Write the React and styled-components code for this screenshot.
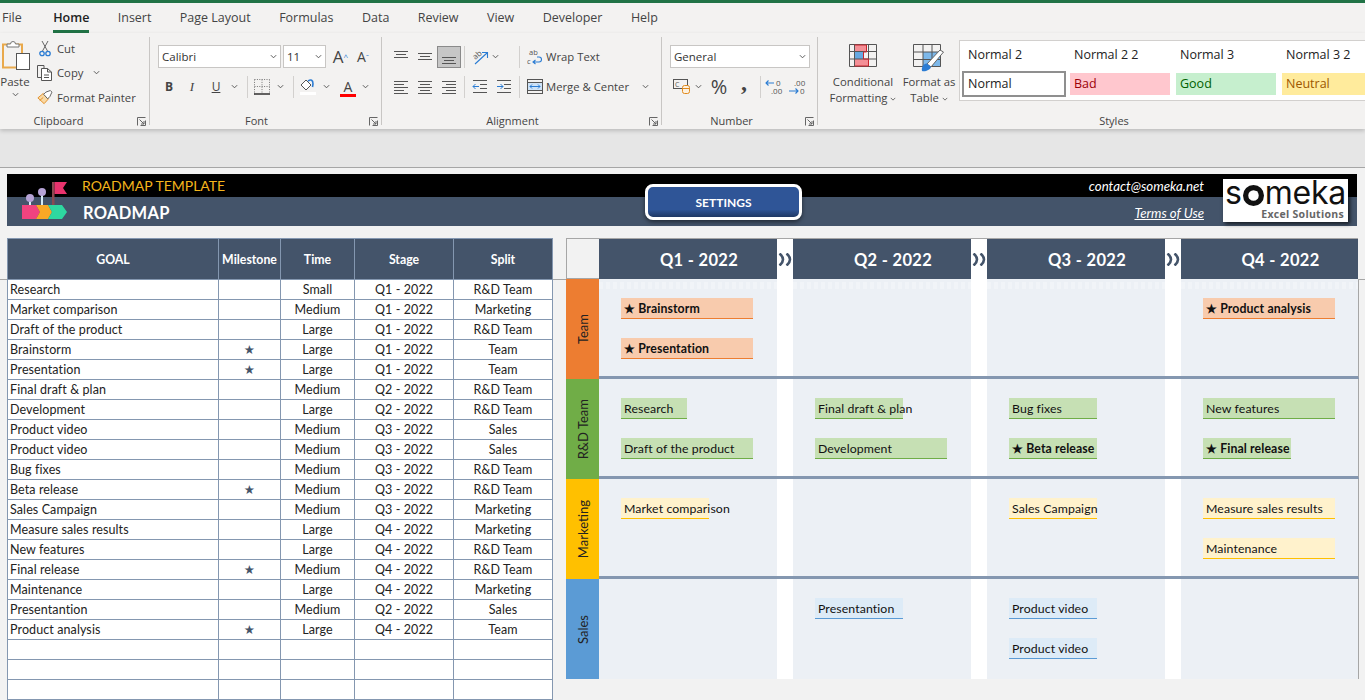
import React from 'react';
import styled, { createGlobalStyle } from 'styled-components';

const Global = createGlobalStyle`
  html, body { margin: 0; padding: 0; background: #f2f2f2; }
  * { box-sizing: border-box; }
`;

const Page = styled.div`
  position: relative; width: 1365px; height: 700px; overflow: hidden;
  background: #f2f2f2; font-family: "Lato", "Liberation Sans", sans-serif;
`;
const GreenBar = styled.div`height: 3px; background: #217346;`;
const TabBar = styled.nav`
  height: 30px; background: #f3f2f1; display: flex; padding-left: 2px; gap: 28.4px;
  font: 12.5px "Open Sans", "Noto Sans", sans-serif; color: #444;
`;
const Tab = styled.div`
  height: 100%; line-height: 30px; position: relative;
  font-weight: ${p => (p.$active ? 600 : 400)}; color: ${p => (p.$active ? '#222' : '#444')};
  border-bottom: 3px solid ${p => (p.$active ? '#217346' : 'transparent')};
  margin-left: ${p => (p.$active ? 3 : 0)}px;
`;
const Ribbon = styled.section`
  height: 96px; background: #f3f2f1; display: flex; padding: 4px 0;
  box-shadow: 0 2px 4px rgba(0,0,0,.18); position: relative; z-index: 1;
  font: 11.3px "Open Sans", "Noto Sans", sans-serif; color: #444;
`;
const Group = styled.div`
  width: ${p => p.$w}px; flex: none; display: flex; flex-direction: column; position: relative;
  border-right: ${p => (p.$last ? 'none' : '1px solid #c8c6c4')};
`;
const GroupBody = styled.div`
  height: 76px; flex: none; padding: ${p => p.$pt ?? 8}px 0 0 ${p => p.$pl ?? 0}px;
  display: ${p => (p.$row ? 'flex' : 'block')};
`;
const GroupLabel = styled.div`
  height: 16px; flex: none; line-height: 16px; text-align: center; font-size: 11px; color: #444;
  padding-right: ${p => p.$pr || 0}px;
`;
const StylesLabel = styled(GroupLabel)`margin-top: 12px; width: 310px;`;
const Launcher = styled.svg`position: absolute; right: 3px; bottom: -1px; width: 9px; height: 9px;`;
const Row = styled.div`
  display: flex; align-items: center; height: ${p => p.$h || 23}px; margin-top: ${p => p.$mt || 0}px;
`;
const Slot = styled.div`
  width: ${p => p.$w}px; height: 22px; flex: none; margin-left: ${p => p.$ml || 0}px;
  display: flex; align-items: center; justify-content: ${p => (p.$start ? 'flex-start' : 'center')}; position: relative;
  white-space: nowrap;
  ${p => p.$on && 'background:#c6c6c6; border:1px solid #8a8a8a;'}
`;
const Sep = styled.div`width: 1px; height: 22px; background: #d2d0ce; flex: none; margin-left: ${p => p.$ml || 0}px;`;
const Field = styled.div`
  width: ${p => p.$w}px; height: 23px; flex: none; background: #fff; border: 1px solid #c8c6c4;
  margin-left: ${p => p.$ml || 0}px; display: flex; align-items: center; justify-content: space-between;
  padding: 0 3px 0 3px; font-size: 11.5px; color: #333;
`;
const Glyph = styled.span`
  font: ${p => p.$weight || 400} ${p => p.$size || 13}px/1 ${p => p.$serif ? '"Liberation Serif", serif' : '"Open Sans", sans-serif'};
  font-style: ${p => (p.$italic ? 'italic' : 'normal')};
  text-decoration: ${p => (p.$under ? 'underline' : 'none')};
  color: ${p => p.$color || '#444'};
  margin-top: ${p => p.$mt || 0}px;
`;
const ColorBar = styled.span`
  position: absolute; left: 50%; bottom: 1px; width: 16px; height: 3px; margin-left: -8px; background: ${p => p.$c};
`;
const ClipLayout = styled.div`display: flex; height: 100%;`;
const PasteCol = styled.div`
  width: 36px; flex: none; display: flex; flex-direction: column; align-items: center; color: #444;
  margin-top: -3px; padding-right: 6px;
`;
const PasteText = styled.span`margin-top: 4px; font-size: 11.5px; line-height: 16px;`;
const PasteChev = styled.span`margin-top: 1px; display: flex;`;
const ClipList = styled.div`display: flex; flex-direction: column; margin-top: -7px;`;
const ClipItem = styled.div`
  display: flex; align-items: center; height: 24.5px; gap: 4px; margin-left: 1px; white-space: nowrap;
`;
const ItemIcon = styled.span`width: 16px; height: 16px; flex: none; display: flex; align-items: center; justify-content: center;`;
const BigBtn = styled.div`
  width: ${p => p.$w}px; flex: none; display: flex; flex-direction: column; align-items: center;
  line-height: 16px; text-align: center; white-space: nowrap;
`;
const BigIcon = styled.div`height: 34px; padding-top: 4px; display: flex; align-items: flex-start;`;
const Gallery = styled.div`
  flex: none; margin-top: 3px; height: 61px; width: 406px; overflow: hidden; background: #fff; border: 1px solid #d2d0ce; border-right: none;
  display: grid; grid-template-columns: repeat(4, 100px); grid-template-rows: 29px 27px; column-gap: 6px; padding-left: 4px;
  font-size: 12.5px; color: #222;
`;
const StyleName = styled.div`padding-left: 4px; line-height: 28px; white-space: nowrap;`;
const Swatch = styled.div`
  height: 22px; margin-top: 3px; line-height: 22px; padding-left: 4px; background: ${p => p.$bg}; color: ${p => p.$fg};
  ${p => p.$sel && 'outline: 2px solid #8f8f8f;'}
`;
const GrayBand = styled.div`height: 39px; background: #e6e6e6; border-bottom: 1px solid #a6a6a6;`;

const Banner = styled.header`position: relative; margin: 6px 8px 0 7px; height: 52px;`;
const BlackStrip = styled.div`
  height: 23px; background: #000; display: flex; align-items: center; justify-content: space-between;
  padding: 0 153px 0 75px;
`;
const NavyStrip = styled.div`
  height: 29px; background: #44546a; display: flex; align-items: center; justify-content: space-between;
  padding: 2px 153px 0 76px;
`;
const Template = styled.span`color: #f4b51c; font-size: 14px;`;
const SheetTitle = styled.span`color: #fff; font-size: 16.5px; font-weight: 700; letter-spacing: .3px;`;
const Contact = styled.span`color: #fff; font-size: 13.3px; font-style: italic;`;
const Terms = styled.span`color: #fff; font-size: 13.2px; font-style: italic; text-decoration: underline;`;
const LogoMark = styled.svg`position: absolute; left: 14px; top: 7px; width: 48px; height: 40px;`;
const SettingsBtn = styled.div`
  position: absolute; left: 638px; top: 10px; width: 157px; height: 36px; border: 3px solid #fff; border-radius: 8px;
  background: linear-gradient(#2f5597 0, #2f5597 75%, #1f3864 100%); color: #fff; font-weight: 700; font-size: 12px;
  display: flex; align-items: center; justify-content: center; box-shadow: 0 2px 4px rgba(0,0,0,.5);
`;
const SomekaCard = styled.div`
  position: absolute; left: 1216px; top: 5px; width: 125px; height: 43px; background: #fff;
  box-shadow: 2px 2px 4px rgba(0,0,0,.7); display: flex; flex-direction: column; align-items: center;
`;
const SomekaWord = styled.div`
  font: 400 32px/28px "Inter", "Open Sans", sans-serif; color: #111; display: flex; align-items: center; letter-spacing: -.2px; height: 28px;
`;
const SomekaO = styled.svg`width: 21px; height: 21px; margin: 4px 1px 0;`;
const SomekaSub = styled.div`
  font: 700 10.5px/12px "Open Sans", sans-serif; color: #666; align-self: flex-end; margin: 1px 4px 0 0; letter-spacing: .3px;
`;

const Sheet = styled.main`display: flex; gap: 13px; padding: 12px 0 0 7px; align-items: flex-start;`;
const FreezeLine = styled.div`position: absolute; left: 0; right: 0; top: 279px; height: 1px; background: #a6a6a6;`;
const Table = styled.table`
  position: relative; z-index: 1;
  width: 545px; flex: none; border-collapse: collapse; table-layout: fixed; font-size: 12.5px; color: #222; background: #fff;
`;
const Th = styled.th`
  height: 41px; padding: 0; background: #44546a; color: #fff; font-size: 12.3px; font-weight: 700;
  border: 1px solid #8497b0; width: ${p => p.$w}px;
`;
const Td = styled.td`
  height: 20px; padding: 0 0 0 ${p => (p.$left ? 2 : 0)}px; border: 1px solid #8497b0; line-height: 18px;
  text-align: ${p => (p.$left ? 'left' : 'center')}; white-space: nowrap; letter-spacing: .1px;
  color: ${p => (p.$star ? '#44546a' : '#222')}; font-family: ${p => (p.$star ? '"DejaVu Sans", sans-serif' : 'inherit')};
`;
const Gantt = styled.section`width: 792px; flex: none; position: relative; z-index: 1;`;
const GanttHead = styled.div`display: grid; grid-template-columns: 33px 178px 16px 178px 16px 178px 16px 177px; height: 41px;`;
const Corner = styled.div`border: 1px solid #a6a6a6; border-right: none; background: #f2f2f2;`;
const Quarter = styled.div`
  background: #44546a; color: #fff; font-size: 16.5px; font-weight: 700; display: flex; align-items: center; justify-content: center;
  border-top: 1px solid #a6a6a6; letter-spacing: .3px; padding: 2px 0 0 22px;
`;
const Arrows = styled.div`
  background: #fff; border-top: 1px solid #a6a6a6; display: flex; align-items: center; justify-content: center;
`;
const Band = styled.div`display: flex; height: 100px;`;
const BandLabel = styled.div`
  width: 33px; flex: none; background: ${p => p.$c}; color: #222; display: flex; align-items: center; justify-content: center;
  font-size: 13px;
`;
const Vertical = styled.span`writing-mode: vertical-rl; transform: rotate(180deg); white-space: nowrap;`;
const Track = styled.div`
  flex: 1; display: grid; grid-template-columns: 178px 16px 178px 16px 178px 16px 177px; background: #fff;
  border-bottom: ${p => (p.$last ? 'none' : '3px solid #8497b0')}; border-right: 1px solid #a6a6a6;
`;
const Cell = styled.div`
  background-color: #ecf0f5; padding: 19px 0 0 22px; display: flex; flex-direction: column; gap: 19px; align-items: flex-start;
  ${p => p.$faint && `
    background-image: repeating-linear-gradient(90deg, rgba(255,255,255,.28) 0 4px, transparent 4px 7px);
    background-size: 100% 7px; background-position: 0 3px; background-repeat: no-repeat;
  `}
`;
const GapCol = styled.div``;
const Bar = styled.div`
  width: ${p => p.$w}px; height: 21px; line-height: 22px; padding-left: 3px; white-space: nowrap;
  background: ${p => p.$bg}; border-bottom: 1px solid ${p => p.$line}; color: #111; font-size: 12.3px;
  font-weight: ${p => (p.$bold ? 700 : 400)}; letter-spacing: .1px;
`;

const Chev = ({ c = '#555', s = 7 }) => (
  <svg width={s} height={s} viewBox="0 0 8 8"><path d="M1 2.5 L4 5.5 L7 2.5" fill="none" stroke={c} strokeWidth="1.1" /></svg>
);
const Corn = () => (
  <Launcher viewBox="0 0 9 9"><path d="M.5 8.5V.5H8.5M8.5 3.5V8.5H3.5M2.5 2.5L7 7M7 4V7H4" fill="none" stroke="#666" strokeWidth="1" /></Launcher>
);
const Lines = ({ rows, w = 16, h = 14 }) => (
  <svg width={w} height={h} viewBox={`0 0 ${w} ${h}`}>
    {rows.map(([a, b, y], i) => <line key={i} x1={a} x2={b} y1={y + .5} y2={y + .5} stroke="#555" strokeWidth="1" />)}
  </svg>
);
const A_TOP = [[1, 15, 1], [3, 13, 4], [1, 15, 7]];
const A_MID = [[1, 15, 3], [3, 13, 6], [1, 15, 9]];
const A_BOT = [[1, 15, 7], [3, 13, 10], [1, 15, 13]];
const A_LEFT = [[1, 15, 1], [1, 11, 4], [1, 15, 7], [1, 11, 10], [1, 15, 13]];
const A_CENT = [[1, 15, 1], [3, 13, 4], [1, 15, 7], [3, 13, 10], [1, 15, 13]];
const A_RIGHT = [[1, 15, 1], [5, 15, 4], [1, 15, 7], [5, 15, 10], [1, 15, 13]];

const PasteIcon = () => (
  <svg width="30" height="30" viewBox="0 0 30 30">
    <rect x="3" y="4.5" width="19" height="23" fill="#f3f2f1" stroke="#e9a94b" strokeWidth="2" />
    <path d="M7 7V4H10.5A2.5 2.5 0 0 1 15.5 4H19V7Z" fill="#fff" stroke="#777" />
    <rect x="16.5" y="13.5" width="13" height="16" fill="#fff" stroke="#555" />
  </svg>
);
const CutIcon = () => (
  <svg width="12" height="17" viewBox="0 0 12 17">
    <path d="M3 1L8.5 11M9 1L3.5 11" stroke="#666" fill="none" />
    <circle cx="3" cy="13.5" r="2.2" fill="none" stroke="#2b7cd3" strokeWidth="1.3" />
    <circle cx="9" cy="13.5" r="2.2" fill="none" stroke="#2b7cd3" strokeWidth="1.3" />
  </svg>
);
const CopyIcon = () => (
  <svg width="16" height="16" viewBox="0 0 16 16">
    <path d="M4.5 12.5H.5V.5H7V3" fill="none" stroke="#555" />
    <path d="M4.5 3.5H10.5L14.5 7V15.5H4.5Z M10.5 3.5V7H14.5" fill="#fff" stroke="#555" />
    <path d="M7 10H12M7 12.5H12" stroke="#555" />
  </svg>
);
const PainterIcon = () => (
  <svg width="18" height="16" viewBox="0 0 18 16">
    <path d="M1 9L7 4L13 10L8 15.5Z" fill="#f9d9a4" stroke="#e08a1e" />
    <path d="M7.5 5L10 2.5L15 0.7L16.8 2.5L14.5 7.5L12 10Z" fill="#fff" stroke="#555" />
    <path d="M3 12L7 8.5" stroke="#e08a1e" />
  </svg>
);
const BorderIcon = () => (
  <svg width="16" height="16" viewBox="0 0 16 16">
    <path d="M.5 .5H15.5M.5 .5V14M15.5 .5V14M8 .5V14M.5 7.5H15.5" stroke="#777" strokeDasharray="1 1.4" fill="none" />
    <path d="M0 15H16" stroke="#222" strokeWidth="1.4" />
  </svg>
);
const FillIcon = () => (
  <svg width="18" height="17" viewBox="0 0 18 17">
    <path d="M2 7L7 2L12 7L7 12Z" fill="#fff" stroke="#555" />
    <path d="M9 3C12 1 14 2 14 6L13.5 9" fill="none" stroke="#2b7cd3" strokeWidth="1.6" />
    <rect x="1" y="14" width="16" height="3" fill="#fff" />
  </svg>
);
const OrientIcon = () => (
  <svg width="17" height="16" viewBox="0 0 17 16" overflow="visible">
    <text x="1" y="9" fontSize="8" fontFamily="Open Sans" fill="#555" transform="rotate(-40 5 7)">ab</text>
    <path d="M3 15L15 4M10 3.5H15.5V9" fill="none" stroke="#2b7cd3" strokeWidth="1.1" />
  </svg>
);
const WrapIcon = () => (
  <svg width="16" height="17" viewBox="0 0 16 17">
    <text x="2" y="6.5" fontSize="7.5" fontFamily="Open Sans" fill="#555">ab</text>
    <text x="0" y="15.5" fontSize="7.5" fontFamily="Open Sans" fill="#555">c</text>
    <path d="M6 14H12A2.5 2.5 0 0 0 12 9H10M8.5 12L6 14L8.5 16" fill="none" stroke="#2b7cd3" strokeWidth="1.1" />
  </svg>
);
const MergeIcon = () => (
  <svg width="16" height="15" viewBox="0 0 16 15">
    <rect x=".5" y=".5" width="15" height="14" fill="none" stroke="#555" />
    <path d="M.5 3.5H15.5M.5 11.5H15.5" stroke="#555" />
    <rect x="1" y="4" width="14" height="7" fill="#cfe3f7" />
    <path d="M3 7.5H13M5 5.5L3 7.5L5 9.5M11 5.5L13 7.5L11 9.5" fill="none" stroke="#2b7cd3" />
  </svg>
);
const IndentIcon = ({ rev }) => (
  <svg width="16" height="14" viewBox="0 0 16 14">
    <path d="M1 .5H15M8 4.5H15M8 8.5H15M1 12.5H15" stroke="#555" />
    <path d={rev ? 'M7 6.5H1M3.5 4L1 6.5L3.5 9' : 'M1 6.5H7M4.5 4L7 6.5L4.5 9'} fill="none" stroke="#2b7cd3" />
  </svg>
);
const AccountIcon = () => (
  <svg width="18" height="15" viewBox="0 0 18 15">
    <rect x=".5" y=".5" width="14" height="9" fill="none" stroke="#555" />
    <text x="2" y="7.5" fontSize="7" fontFamily="Open Sans" fill="#555">C</text>
    <rect x="9.5" y="6.5" width="7" height="8" rx="2" fill="#fdf1df" stroke="#e08a1e" />
    <path d="M9.5 9.5H16.5" stroke="#e08a1e" />
  </svg>
);
const DecIcon = ({ more }) => (
  <svg width="22" height="20" viewBox="0 0 22 20" fontFamily="Open Sans" fontSize="8" fill="#555">
    <text x={more ? 6 : 11} y="9">{more ? '.00' : '0'}</text>
    <text x={more ? 12 : 6} y="17">{more ? '0' : '.00'}</text>
    <path d={more ? 'M1 14H10M7.5 11.5L10 14L7.5 16.5' : 'M9 6H1M3.5 3.5L1 6L3.5 8.5'} fill="none" stroke="#2b7cd3" strokeWidth="1.1" />
  </svg>
);
const CondIcon = () => (
  <svg width="28" height="23" viewBox="0 0 28 23">
    <rect x="5.5" y="1" width="12" height="7" fill="#f48f96" />
    <rect x="5.5" y="8" width="9" height="7" fill="#66a8e0" />
    <rect x="5.5" y="15" width="14" height="7" fill="#f48f96" />
    <path d="M.5 .5H27.5V22.5H.5ZM.5 7.5H27.5M.5 15H27.5M5.5 .5V22.5M19.5 .5V22.5" fill="none" stroke="#555" />
    <path d="M5.5 1H17.5V8H14.5V15H19.5V22H5.5" fill="none" stroke="#c8242c" />
  </svg>
);
const TableIcon = () => (
  <svg width="32" height="28" viewBox="0 0 32 28">
    <rect x="10" y="8" width="18" height="15" fill="#7db8ea" />
    <path d="M.5 .5H27.5V22.5H.5ZM.5 8H27.5M.5 15.5H27.5M10 .5V22.5M19 .5V22.5" fill="none" stroke="#555" />
    <path d="M14 20L27 6L30.5 8L18 23Z" fill="#fff" stroke="#666" />
    <path d="M9 27C8 23 11 19 14 19.5L18 23C17 26 12 28 9 27Z" fill="#2b7cd3" />
  </svg>
);
const DoubleChevron = () => (
  <svg width="15" height="13" viewBox="0 0 15 13">
    <path d="M1.5 .5C4.5 3 5 4.5 5 6.5C5 8.5 4.5 10 1.5 12.5M8.5 .5C11.5 3 12 4.5 12 6.5C12 8.5 11.5 10 8.5 12.5" fill="none" stroke="#44546a" strokeWidth="2.6" />
  </svg>
);

const DATA = [
  ['Research', '', 'Small', 'Q1 - 2022', 'R&D Team'],
  ['Market comparison', '', 'Medium', 'Q1 - 2022', 'Marketing'],
  ['Draft of the product', '', 'Large', 'Q1 - 2022', 'R&D Team'],
  ['Brainstorm', '★', 'Large', 'Q1 - 2022', 'Team'],
  ['Presentation', '★', 'Large', 'Q1 - 2022', 'Team'],
  ['Final draft & plan', '', 'Medium', 'Q2 - 2022', 'R&D Team'],
  ['Development', '', 'Large', 'Q2 - 2022', 'R&D Team'],
  ['Product video', '', 'Medium', 'Q3 - 2022', 'Sales'],
  ['Product video', '', 'Medium', 'Q3 - 2022', 'Sales'],
  ['Bug fixes', '', 'Medium', 'Q3 - 2022', 'R&D Team'],
  ['Beta release', '★', 'Medium', 'Q3 - 2022', 'R&D Team'],
  ['Sales Campaign', '', 'Medium', 'Q3 - 2022', 'Marketing'],
  ['Measure sales results', '', 'Large', 'Q4 - 2022', 'Marketing'],
  ['New features', '', 'Large', 'Q4 - 2022', 'R&D Team'],
  ['Final release', '★', 'Medium', 'Q4 - 2022', 'R&D Team'],
  ['Maintenance', '', 'Large', 'Q4 - 2022', 'Marketing'],
  ['Presentantion', '', 'Medium', 'Q2 - 2022', 'Sales'],
  ['Product analysis', '★', 'Large', 'Q4 - 2022', 'Team'],
  ['', '', '', '', ''], ['', '', '', '', ''], ['', '', '', '', ''],
];

const BANDS = [
  { name: 'Team', c: '#ed7d31', bg: '#f8cbad', line: '#ed7d31', faint: true, q: [
    [['★ Brainstorm', 132, 1], ['★ Presentation', 132, 1]], [], [], [['★ Product analysis', 132, 1]] ] },
  { name: 'R&D Team', c: '#70ad47', bg: '#c6e0b4', line: '#70ad47', q: [
    [['Research', 66], ['Draft of the product', 132]], [['Final draft & plan', 88], ['Development', 132]],
    [['Bug fixes', 88], ['★ Beta release', 88, 1]], [['New features', 132], ['★ Final release', 88, 1]] ] },
  { name: 'Marketing', c: '#ffc000', bg: '#fff2cc', line: '#ffc000', q: [
    [['Market comparison', 88]], [], [['Sales Campaign', 88]], [['Measure sales results', 132], ['Maintenance', 132]] ] },
  { name: 'Sales', c: '#5b9bd5', bg: '#ddebf7', line: '#5b9bd5', last: true, q: [
    [], [['Presentantion', 88]], [['Product video', 88], ['Product video', 88]], [] ] },
];

const TABS = [['File'], ['Home', true], ['Insert'], ['Page Layout'], ['Formulas'], ['Data'], ['Review'], ['View'], ['Developer'], ['Help']];

export default function App() {
  return (
    <Page>
      <Global />
      <GreenBar />
      <TabBar>
        {TABS.map(([t, a]) => <Tab key={t} $active={a}>{t}</Tab>)}
      </TabBar>
      <Ribbon>
        <Group $w={150}>
          <GroupBody $pt={6} $pl={0}>
            <ClipLayout>
              <PasteCol>
                <PasteIcon />
                <PasteText>Paste</PasteText>
                <PasteChev><Chev /></PasteChev>
              </PasteCol>
              <ClipList>
                <ClipItem><ItemIcon><CutIcon /></ItemIcon>Cut</ClipItem>
                <ClipItem><ItemIcon><CopyIcon /></ItemIcon>Copy&nbsp;&nbsp;<Chev /></ClipItem>
                <ClipItem><ItemIcon><PainterIcon /></ItemIcon>Format Painter</ClipItem>
              </ClipList>
            </ClipLayout>
          </GroupBody>
          <GroupLabel $pr={32}>Clipboard</GroupLabel>
          <Corn />
        </Group>
        <Group $w={232}>
          <GroupBody $pl={8}>
            <Row>
              <Field $w={123}>Calibri<Chev /></Field>
              <Field $w={43} $ml={2}>11<Chev /></Field>
              <Slot $w={23} $ml={3}><Glyph $size={17}>A</Glyph><Glyph $size={8} $color="#2b7cd3">^</Glyph></Slot>
              <Slot $w={22}><Glyph $size={14}>A</Glyph><Glyph $size={8} $color="#2b7cd3">ˇ</Glyph></Slot>
            </Row>
            <Row $mt={7}>
              <Slot $w={22}><Glyph $weight={700} $size={12}>B</Glyph></Slot>
              <Slot $w={24}><Glyph $italic $size={13} $serif>I</Glyph></Slot>
              <Slot $w={24}><Glyph $under $size={12}>U</Glyph></Slot>
              <Slot $w={12}><Chev /></Slot>
              <Sep $ml={7} />
              <Slot $w={28}><BorderIcon /></Slot>
              <Slot $w={8}><Chev /></Slot>
              <Sep $ml={9} />
              <Slot $w={27}><FillIcon /></Slot>
              <Slot $w={10}><Chev /></Slot>
              <Slot $w={26} $ml={4}><Glyph $size={14}>A</Glyph><ColorBar $c="#ff0000" /></Slot>
              <Slot $w={8}><Chev /></Slot>
            </Row>
          </GroupBody>
          <GroupLabel $pr={18}>Font</GroupLabel>
          <Corn />
        </Group>
        <Group $w={280}>
          <GroupBody $pl={7}>
            <Row>
              <Slot $w={24}><Lines rows={A_TOP} /></Slot>
              <Slot $w={24}><Lines rows={A_MID} /></Slot>
              <Slot $w={24} $on><Lines rows={A_BOT} /></Slot>
              <Sep $ml={3} />
              <Slot $w={20} $ml={5}><OrientIcon /></Slot>
              <Slot $w={10}><Chev /></Slot>
              <Sep $ml={19} />
              <Slot $w={16} $ml={7}><WrapIcon /></Slot>
              <Slot $w={60} $ml={3} $start>Wrap Text</Slot>
            </Row>
            <Row $mt={7}>
              <Slot $w={24}><Lines rows={A_LEFT} /></Slot>
              <Slot $w={24}><Lines rows={A_CENT} /></Slot>
              <Slot $w={24}><Lines rows={A_RIGHT} /></Slot>
              <Sep $ml={3} />
              <Slot $w={24} $ml={3}><IndentIcon rev /></Slot>
              <Slot $w={24}><IndentIcon /></Slot>
              <Sep $ml={3} />
              <Slot $w={16} $ml={7}><MergeIcon /></Slot>
              <Slot $w={88} $ml={3} $start>Merge &amp; Center</Slot>
              <Slot $w={14} $ml={4}><Chev /></Slot>
            </Row>
          </GroupBody>
          <GroupLabel $pr={18}>Alignment</GroupLabel>
          <Corn />
        </Group>
        <Group $w={156}>
          <GroupBody $pl={8}>
            <Row><Field $w={140}>General<Chev /></Field></Row>
            <Row $mt={7}>
              <Slot $w={18} $ml={3}><AccountIcon /></Slot>
              <Slot $w={10} $ml={2}><Chev /></Slot>
              <Slot $w={24} $ml={4}><Glyph $size={20}>%</Glyph></Slot>
              <Slot $w={24} $ml={1}><Glyph $size={24} $weight={700} $serif $mt={-10}>,</Glyph></Slot>
              <Sep $ml={4} />
              <Slot $w={24} $ml={3}><DecIcon /></Slot>
              <Slot $w={22}><DecIcon more /></Slot>
            </Row>
          </GroupBody>
          <GroupLabel $pr={16}>Number</GroupLabel>
          <Corn />
        </Group>
        <Group $w={141} $last>
          <GroupBody $row $pt={3} $pl={8}>
            <BigBtn $w={74}>
              <BigIcon><CondIcon /></BigIcon>
              <span>Conditional</span>
              <span>Formatting <Chev s={6} /></span>
            </BigBtn>
            <BigBtn $w={58}>
              <BigIcon><TableIcon /></BigIcon>
              <span>Format as</span>
              <span>Table <Chev s={6} /></span>
            </BigBtn>
          </GroupBody>
        </Group>
        <Group $w={406} $last>
          <Gallery>
            <StyleName>Normal 2</StyleName>
            <StyleName>Normal 2 2</StyleName>
            <StyleName>Normal 3</StyleName>
            <StyleName>Normal 3 2</StyleName>
            <Swatch $bg="#fff" $fg="#222" $sel>Normal</Swatch>
            <Swatch $bg="#ffc7ce" $fg="#9c0006">Bad</Swatch>
            <Swatch $bg="#c6efce" $fg="#006100">Good</Swatch>
            <Swatch $bg="#ffeb9c" $fg="#9c5700">Neutral</Swatch>
          </Gallery>
          <StylesLabel>Styles</StylesLabel>
        </Group>
      </Ribbon>
      <GrayBand />
      <Banner>
        <BlackStrip>
          <Template>ROADMAP TEMPLATE</Template>
          <Contact>contact@someka.net</Contact>
        </BlackStrip>
        <NavyStrip>
          <SheetTitle>ROADMAP</SheetTitle>
          <Terms>Terms of Use</Terms>
        </NavyStrip>
        <LogoMark viewBox="0 0 48 40">
          <rect x="31" y="1" width="2.5" height="23" fill="#8a4a50" />
          <path d="M33.5 1H46L42 7L46 13H33.5Z" fill="#e8336d" />
          <rect x="8" y="17" width="2" height="7" fill="#d6ecf5" />
          <rect x="20" y="11" width="2" height="13" fill="#d6ecf5" />
          <circle cx="9" cy="17" r="4" fill="#b6a3d6" />
          <circle cx="21" cy="11" r="4" fill="#b6a3d6" />
          <path d="M1 24H15L19 31L15 38H1Z" fill="#f0437f" />
          <path d="M15 24H27L31 31L27 38H15L19 31Z" fill="#f9a825" />
          <path d="M27 24H41L46 31L41 38H27L31 31Z" fill="#2ed8a0" />
        </LogoMark>
        <SettingsBtn>SETTINGS</SettingsBtn>
        <SomekaCard>
          <SomekaWord>
            s
            <SomekaO viewBox="0 0 20 20">
              <circle cx="10" cy="10" r="7.5" fill="none" stroke="#111" strokeWidth="5" />
              <path d="M7 13V10M10 13V8M13 13V6" stroke="#fff" strokeWidth="1.5" />
            </SomekaO>
            meka
          </SomekaWord>
          <SomekaSub>Excel Solutions</SomekaSub>
        </SomekaCard>
      </Banner>
      <FreezeLine />
      <Sheet>
        <Table>
          <thead>
            <tr>
              <Th $w={211}>GOAL</Th><Th $w={62}>Milestone</Th><Th $w={74}>Time</Th><Th $w={99}>Stage</Th><Th $w={99}>Split</Th>
            </tr>
          </thead>
          <tbody>
            {DATA.map((r, i) => (
              <tr key={i}>
                <Td $left>{r[0]}</Td><Td $star>{r[1]}</Td><Td>{r[2]}</Td><Td>{r[3]}</Td><Td>{r[4]}</Td>
              </tr>
            ))}
          </tbody>
        </Table>
        <Gantt>
          <GanttHead>
            <Corner />
            <Quarter>Q1 - 2022</Quarter><Arrows><DoubleChevron /></Arrows>
            <Quarter>Q2 - 2022</Quarter><Arrows><DoubleChevron /></Arrows>
            <Quarter>Q3 - 2022</Quarter><Arrows><DoubleChevron /></Arrows>
            <Quarter>Q4 - 2022</Quarter>
          </GanttHead>
          {BANDS.map(b => (
            <Band key={b.name}>
              <BandLabel $c={b.c}><Vertical>{b.name}</Vertical></BandLabel>
              <Track $last={b.last}>
                {b.q.map((items, qi) => (
                  <React.Fragment key={qi}>
                    <Cell $faint={b.faint}>
                      {items.map(([t, w, bold], i) => (
                        <Bar key={i} $w={w} $bg={b.bg} $line={b.line} $bold={bold}>{t}</Bar>
                      ))}
                    </Cell>
                    {qi < 3 && <GapCol />}
                  </React.Fragment>
                ))}
              </Track>
            </Band>
          ))}
        </Gantt>
      </Sheet>
    </Page>
  );
}
